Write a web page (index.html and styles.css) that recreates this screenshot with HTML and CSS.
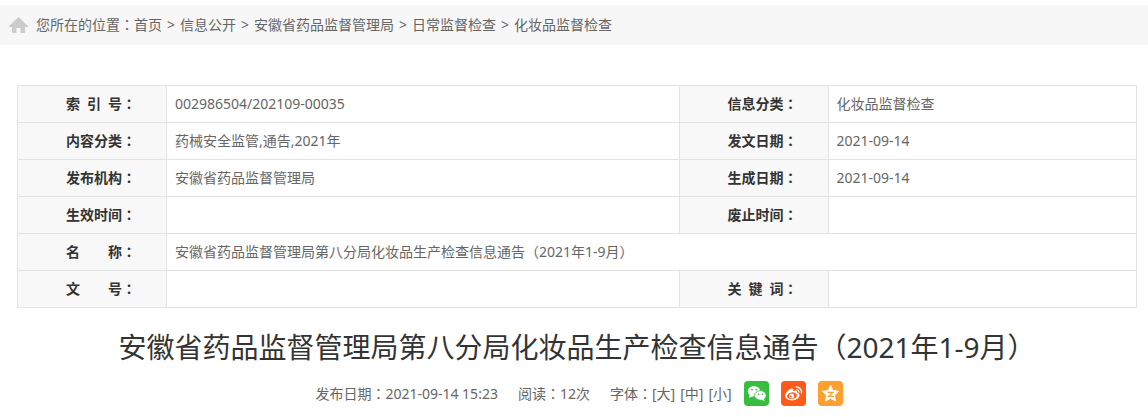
FILE: index.html
```html
<!DOCTYPE html>
<html lang="zh-CN">

<head>
    <meta charset="UTF-8">
    <meta name="viewport" content="width=device-width, initial-scale=1.0">
    <title>安徽省药品监督管理局第八分局化妆品生产检查信息通告（2021年1-9月）</title>
    <link rel="stylesheet" href="styles.css">
</head>

<body>
    <nav class="location">
        <svg class="home-icon" viewBox="0 0 19 16" aria-hidden="true">
            <path d="M9.5 0 L19 9 V10 H16 V15 Q16 16 15 16 H11.5 V11 H7.5 V16 H4 Q3 16 3 15 V10 H0 V9 Z" />
        </svg>
        <span>您所在的位置<span class="mark" lang="zh-TW">：</span></span>
        <a href="#">首页</a>
        <span class="arrow">&gt;</span>
        <a href="#">信息公开</a>
        <span class="arrow">&gt;</span>
        <a href="#">安徽省药品监督管理局</a>
        <span class="arrow">&gt;</span>
        <a href="#">日常监督检查</a>
        <span class="arrow">&gt;</span>
        <a href="#">化妆品监督检查</a>
    </nav>

    <div class="container">
        <table class="info-table">
            <colgroup>
                <col class="col-label">
                <col class="col-wide">
                <col class="col-label">
                <col>
            </colgroup>
            <tr>
                <th scope="row"><span class="label">索 引 号</span><span class="mark" lang="zh-TW">：</span></th>
                <td>002986504/202109-00035</td>
                <th scope="row"><span class="label">信息分类</span><span class="mark" lang="zh-TW">：</span></th>
                <td>化妆品监督检查</td>
            </tr>
            <tr>
                <th scope="row"><span class="label">内容分类</span><span class="mark" lang="zh-TW">：</span></th>
                <td>药械安全监管,通告,2021年</td>
                <th scope="row"><span class="label">发文日期</span><span class="mark" lang="zh-TW">：</span></th>
                <td>2021-09-14</td>
            </tr>
            <tr>
                <th scope="row"><span class="label">发布机构</span><span class="mark" lang="zh-TW">：</span></th>
                <td>安徽省药品监督管理局</td>
                <th scope="row"><span class="label">生成日期</span><span class="mark" lang="zh-TW">：</span></th>
                <td>2021-09-14</td>
            </tr>
            <tr>
                <th scope="row"><span class="label">生效时间</span><span class="mark" lang="zh-TW">：</span></th>
                <td></td>
                <th scope="row"><span class="label">废止时间</span><span class="mark" lang="zh-TW">：</span></th>
                <td></td>
            </tr>
            <tr>
                <th scope="row"><span class="label">名 称</span><span class="mark" lang="zh-TW">：</span></th>
                <td colspan="3">安徽省药品监督管理局第八分局化妆品生产检查信息通告<span class="mark" lang="zh-TW">（</span>2021年1-9月<span class="mark" lang="zh-TW">）</span></td>
            </tr>
            <tr>
                <th scope="row"><span class="label">文 号</span><span class="mark" lang="zh-TW">：</span></th>
                <td></td>
                <th scope="row"><span class="label">关 键 词</span><span class="mark" lang="zh-TW">：</span></th>
                <td></td>
            </tr>
        </table>

        <h1 class="title">安徽省药品监督管理局第八分局化妆品生产检查信息通告<span class="mark" lang="zh-TW">（</span>2021年1-9月<span class="mark" lang="zh-TW">）</span></h1>

        <div class="meta">
            <span>发布日期<span class="mark" lang="zh-TW">：</span>2021-09-14 15:23</span>
            <span>阅读<span class="mark" lang="zh-TW">：</span>12次</span>
            <div class="font-size">
                <span>字体<span class="mark" lang="zh-TW">：</span></span>
                <div class="sizes">
                    <button type="button">[大]</button>
                    <button type="button">[中]</button>
                    <button type="button">[小]</button>
                </div>
            </div>
            <div class="share">
                <a class="wechat" href="#" aria-label="微信">
                    <svg viewBox="0 0 25 25">
                        <ellipse cx="10" cy="10.2" rx="6.2" ry="5.2" fill="#fff" />
                        <path d="M6 13 L5 17 L9 15 Z" fill="#fff" />
                        <ellipse cx="16.4" cy="14.4" rx="5.8" ry="4.8" fill="#fff" stroke="#37be3f" stroke-width="0.8" />
                        <path d="M17 18.5 L20.3 20 L20 17 Z" fill="#fff" />
                        <circle cx="8" cy="8.6" r="0.9" fill="#37be3f" />
                        <circle cx="12.2" cy="8.6" r="0.9" fill="#37be3f" />
                        <circle cx="14.6" cy="13.2" r="0.8" fill="#37be3f" />
                        <circle cx="18.4" cy="13.2" r="0.8" fill="#37be3f" />
                    </svg>
                </a>
                <a class="weibo" href="#" aria-label="微博">
                    <svg viewBox="0 0 25 25">
                        <path d="M10.6 7.6 C12 7.2 12.8 8.2 12.3 10 C14.8 9 16.8 9.4 16.2 11.7 C18 12.2 18.8 13.2 18.5 14.8 C18 17.5 14.8 19.4 11 19.4 C7.2 19.4 4.2 17.6 4.2 14.8 C4.2 12 8 8.2 10.6 7.6 Z" fill="#fff" />
                        <ellipse cx="11" cy="14.7" rx="5" ry="3.3" fill="#ff5a19" transform="rotate(-8 11 14.7)" />
                        <circle cx="10.6" cy="14.9" r="2.5" fill="#fff" />
                        <circle cx="9.9" cy="15.4" r="0.9" fill="#ff5a19" />
                        <path d="M15.2 6 A5 5 0 0 1 20.4 12" fill="none" stroke="#fff" stroke-width="1.3" stroke-linecap="round" />
                        <path d="M15.6 8.5 A2.5 2.5 0 0 1 18 11.3" fill="none" stroke="#fff" stroke-width="1.1" stroke-linecap="round" />
                    </svg>
                </a>
                <a class="qzone" href="#" aria-label="QQ空间">
                    <svg viewBox="0 0 25 25">
                        <path d="M12.5 4.4 L14.9 9.6 L20.6 10.3 L16.5 14.2 L17.5 20 L12.5 17.2 L7.5 20 L8.5 14.2 L4.4 10.3 L10.1 9.6 Z" fill="#fff" stroke="#fff" stroke-linejoin="round" />
                        <path d="M9.6 11.3 H15 L10.6 15.3 H16" fill="none" stroke="#ff9f30" stroke-width="1.2" />
                    </svg>
                </a>
            </div>
        </div>
    </div>
</body>

</html>
```
FILE: styles.css
```css
body {
    margin: 0;
    padding-top: 5px;
    font-family: "Noto Sans", "Noto Sans CJK SC", sans-serif;
    font-size: 14px;
    line-height: 20px;
    color: #666;
    background-color: #fff;
}

a {
    color: inherit;
    text-decoration: none;
}

/* centred full-width punctuation */
.mark {
    font-family: "Noto Sans CJK TC", sans-serif;
    line-height: 1;
}

.location {
    display: flex;
    align-items: center;
    height: 40px;
    padding-left: 9px;
    background-color: #f7f7f7;
}

.home-icon {
    width: 19px;
    height: 16px;
    margin-right: 8px;
    fill: #ccc;
}

.location .arrow {
    margin: 0 5px;
}

.container {
    margin: 40px 11px 0 17px;
}

.info-table {
    width: 100%;
    table-layout: fixed;
    border-collapse: collapse;
}

.info-table .col-label {
    width: 149px;
}

.info-table .col-wide {
    width: 45.8%;
}

.info-table th,
.info-table td {
    height: 20px;
    padding: 8px;
    border: 1px solid #e3e3e3;
    text-align: left;
}

.info-table th {
    padding-right: 30px;
    background-color: #f8f8f8;
    color: #333;
    text-align: right;
    white-space: nowrap;
}

.info-table .label {
    display: inline-block;
    width: 4em;
    text-align-last: justify;
}

.title {
    margin: 19px 0 0;
    font-size: 28px;
    font-weight: normal;
    line-height: 40px;
    color: #333;
    text-align: center;
}

.meta {
    display: flex;
    justify-content: center;
    align-items: center;
    gap: 20px;
    margin-top: 14px;
    padding-left: 4px;
    white-space: nowrap;
}

.font-size,
.sizes {
    display: flex;
    align-items: center;
}

.sizes {
    gap: 5px;
}

.sizes button {
    padding: 0;
    border: none;
    background: none;
    font: inherit;
    color: inherit;
    cursor: pointer;
}

.share {
    display: flex;
    gap: 12px;
    margin-left: -8px;
}

.share a {
    width: 25px;
    height: 25px;
    border-radius: 4px;
}

.share svg {
    display: block;
}

.wechat {
    background-color: #37be3f;
}

.weibo {
    background-color: #ff5a19;
}

.qzone {
    background-color: #ff9f30;
}
```
